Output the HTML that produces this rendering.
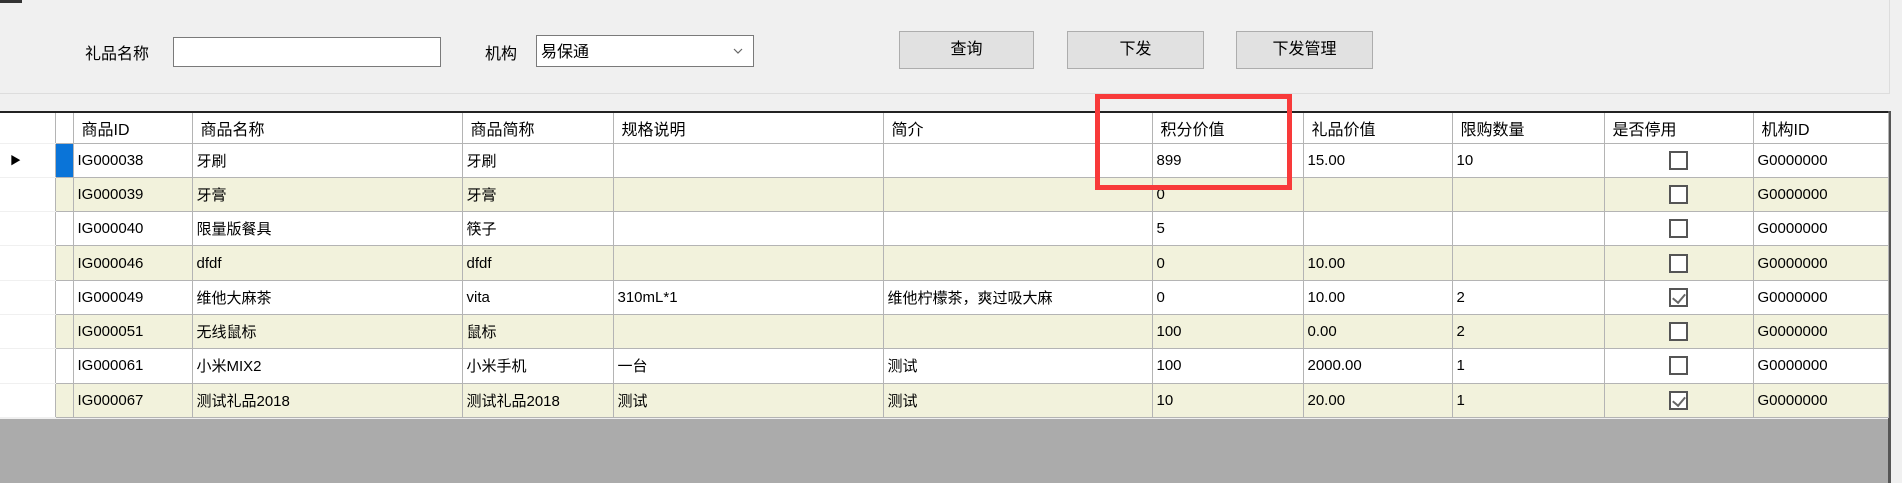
<!DOCTYPE html>
<html><head><meta charset="utf-8"><style>
*{margin:0;padding:0;box-sizing:border-box}
body{width:1902px;height:483px;overflow:hidden;background:#f0f0f0;position:relative;font-family:"Liberation Sans","Noto Sans CJK SC",sans-serif;font-size:15px;color:#000}
.a{position:absolute}
.btn{position:absolute;top:31px;height:38px;background:#e1e1e1;border:1px solid #adadad;text-align:center;line-height:36px;font-size:16px}
table{position:absolute;left:0;top:113px;border-collapse:collapse;table-layout:fixed;width:1888px}
td{border:1px solid #b4b4b4;height:34.3px;padding:0 0 0 4px;white-space:nowrap;overflow:hidden;font-size:15px;background:#fff}
tr.h td{height:30px;background:#fff;border-top:none;font-size:16px;padding-left:8px}
tr.y td{background:#f2f2dc}
td.rh{background:#fff !important;border-left:none;border-top-color:#f0f0f0;border-bottom-color:#f0f0f0}
td.sel{padding:0}
td.cb{text-align:center;padding:0}
.box{display:inline-block;width:19px;height:19px;border:2px solid #555;background:#fff;vertical-align:middle;position:relative}
.chk:after{content:"";position:absolute;left:4px;top:1px;width:6px;height:10px;border:solid #666;border-width:0 2px 2px 0;transform:rotate(40deg)}
</style></head><body>
<div class="a" style="left:0;top:0;width:22px;height:3px;background:#333"></div>
<div class="a" style="left:0;top:0;width:1890px;height:94px;border:1px solid #ddd;border-top:none;border-left:none"></div>
<div class="a" style="left:85px;top:40px;font-size:16px">礼品名称</div>
<div class="a" style="left:173px;top:37px;width:268px;height:30px;background:#fff;border:1px solid #7a7a7a"></div>
<div class="a" style="left:485px;top:40px;font-size:16px">机构</div>
<div class="a" style="left:536px;top:35px;width:218px;height:32px;background:#fff;border:1px solid #7a7a7a;padding:2px 4px;font-size:16px">易保通<svg style="position:absolute;right:10px;top:12px" width="10" height="7"><path d="M1 1 L5 5 L9 1" stroke="#666" fill="none" stroke-width="1.2"/></svg></div>
<div class="btn" style="left:899px;width:135px">查询</div>
<div class="btn" style="left:1067px;width:137px">下发</div>
<div class="btn" style="left:1236px;width:137px">下发管理</div>
<div class="a" style="left:0;top:111px;width:1890px;height:2px;background:#222"></div>
<div class="a" style="left:0;top:419px;width:1888px;height:64px;background:#ababab"></div>
<div class="a" style="left:1888px;top:111px;width:3px;height:372px;background:#555"></div>
<table>
<colgroup><col style="width:55px"><col style="width:18px"><col style="width:119px"><col style="width:270px"><col style="width:151px"><col style="width:270px"><col style="width:269px"><col style="width:151px"><col style="width:149px"><col style="width:152px"><col style="width:149px"><col style="width:135px"></colgroup>
<tr class="h"><td class="rh"></td><td></td><td>商品ID</td><td>商品名称</td><td>商品简称</td><td>规格说明</td><td>简介</td><td>积分价值</td><td>礼品价值</td><td>限购数量</td><td>是否停用</td><td>机构ID</td></tr>
<tr><td class="rh" style="padding-left:10px;font-size:11px">▶</td><td class="sel" style="background:#0a74d8"></td><td>IG000038</td><td>牙刷</td><td>牙刷</td><td></td><td></td><td>899</td><td>15.00</td><td>10</td><td class="cb"><span class="box"></span></td><td>G0000000</td></tr>
<tr class="y"><td class="rh"></td><td></td><td>IG000039</td><td>牙膏</td><td>牙膏</td><td></td><td></td><td>0</td><td></td><td></td><td class="cb"><span class="box"></span></td><td>G0000000</td></tr>
<tr><td class="rh"></td><td></td><td>IG000040</td><td>限量版餐具</td><td>筷子</td><td></td><td></td><td>5</td><td></td><td></td><td class="cb"><span class="box"></span></td><td>G0000000</td></tr>
<tr class="y"><td class="rh"></td><td></td><td>IG000046</td><td>dfdf</td><td>dfdf</td><td></td><td></td><td>0</td><td>10.00</td><td></td><td class="cb"><span class="box"></span></td><td>G0000000</td></tr>
<tr><td class="rh"></td><td></td><td>IG000049</td><td>维他大麻茶</td><td>vita</td><td>310mL*1</td><td>维他柠檬茶，爽过吸大麻</td><td>0</td><td>10.00</td><td>2</td><td class="cb"><span class="box chk"></span></td><td>G0000000</td></tr>
<tr class="y"><td class="rh"></td><td></td><td>IG000051</td><td>无线鼠标</td><td>鼠标</td><td></td><td></td><td>100</td><td>0.00</td><td>2</td><td class="cb"><span class="box"></span></td><td>G0000000</td></tr>
<tr><td class="rh"></td><td></td><td>IG000061</td><td>小米MIX2</td><td>小米手机</td><td>一台</td><td>测试</td><td>100</td><td>2000.00</td><td>1</td><td class="cb"><span class="box"></span></td><td>G0000000</td></tr>
<tr class="y"><td class="rh"></td><td></td><td>IG000067</td><td>测试礼品2018</td><td>测试礼品2018</td><td>测试</td><td>测试</td><td>10</td><td>20.00</td><td>1</td><td class="cb"><span class="box chk"></span></td><td>G0000000</td></tr>
</table>
<div class="a" style="left:1095px;top:94px;width:197px;height:96px;border:5px solid #f83a3a"></div>
</body></html>
